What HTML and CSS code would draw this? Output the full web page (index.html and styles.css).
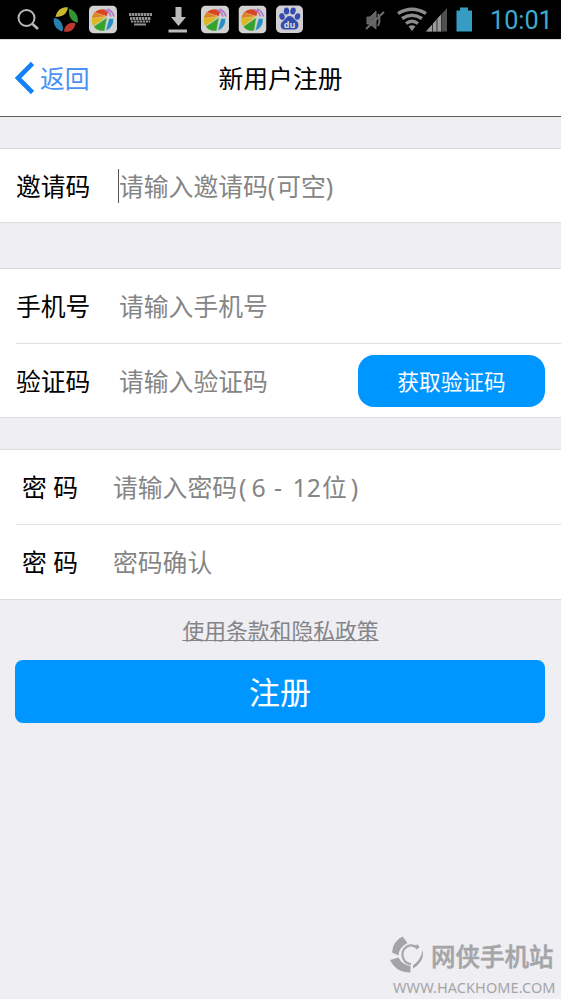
FILE: index.html
```html
<!DOCTYPE html>
<html lang="zh-CN">
<head>
<meta charset="utf-8">
<title>新用户注册</title>
<link rel="stylesheet" href="styles.css">
</head>
<body>
<svg width="0" height="0" class="defs">
  <defs>
    <clipPath id="disc"><circle cx="13.500" cy="14.500" r="10.800"/></clipPath>
    <symbol id="fan" viewBox="0 0 28 28">
      <rect width="28" height="28" rx="5" fill="#d2d2d2"/>
      <g clip-path="url(#disc)" stroke="#d2d2d2" stroke-width=".4">
        <path d="M18 11L3 7L8 0L20 3Z" fill="#d8451f"/>
        <path d="M18 11L0 5V14Z" fill="#df8220"/>
        <path d="M18 11L0 13V24Z" fill="#dcb81f"/>
        <path d="M18 12L2 23L8 30L15 28Z" fill="#35a32b"/>
        <path d="M20 13L16 28L27 24V13Z" fill="#268fc8"/>
      </g>
      <path d="M15.500 4.500Q20 5 22 11M18.500 3.500Q23 5 25 11" fill="none" stroke="#b072c6" stroke-width="1.600"/>
    </symbol>
  </defs>
</svg>
<div class="status">
  <svg class="notices" width="310" height="39" viewBox="0 0 310 39">
    <g fill="none" stroke="#b9b9b9" stroke-width="2"><circle cx="26.500" cy="18" r="8"/><path d="M32.500 24L38 29" stroke-width="2.600"/></g>
    <path d="M55.500 17C57 10 62 6.500 68 7.500Q67 14 61.500 16Q58 17 55.500 17Z" fill="#c9b72c"/>
    <path d="M69 8.500C76 11 79 17 77.500 23Q71 21 69.500 16Q68.500 12 69 8.500Z" fill="#329432"/>
    <path d="M75.500 23.500C75 29 70 33 64 31.500Q64 26 69 23.500Q73 22 75.500 23.500Z" fill="#bd3630"/>
    <path d="M54 18C52.500 24 56 30 62.500 31.500Q64 27 61 22Q58 18 54 18Z" fill="#287fad"/>
    <use href="#fan" x="89" y="5.500" width="28" height="28"/>
    <g stroke="#929292" fill="none">
      <path d="M129 14.500H152M130 18.500H151" stroke-width="3" stroke-dasharray="2.400 .6"/>
      <path d="M131 21.500H150" stroke-width="2" stroke-dasharray="2.400 .6"/>
      <path d="M134 24.500H146" stroke-width="2"/>
    </g>
    <path d="M175.500 7H181.500V17H186L178.500 26L171 17H175.500ZM168.500 29.500H187V32.500H168.500Z" fill="#bbb"/>
    <use href="#fan" x="201" y="5.500" width="28" height="28"/>
    <use href="#fan" x="238.500" y="5.500" width="28" height="28"/>
    <rect x="276" y="5.500" width="27" height="27.500" rx="5" fill="#cfcfd3"/>
    <g fill="#344bb0">
      <ellipse cx="282" cy="16.500" rx="2.700" ry="3.400" transform="rotate(-12 282 16.500)"/>
      <ellipse cx="286.500" cy="11" rx="2.700" ry="3.500"/>
      <ellipse cx="293" cy="11" rx="2.700" ry="3.500" transform="rotate(12 293 11)"/>
      <ellipse cx="297.500" cy="16.500" rx="2.700" ry="3.300" transform="rotate(15 297.500 16.500)"/>
      <path d="M289.500 16C293 16 294 19.500 297 21.500C300 25 298 30 294 29.500H285C281 30 279 25 282.500 21.500C286 19.500 286 16 289.500 16Z"/>
    </g>
    <text class="paw-text" x="289.500" y="27.500" text-anchor="middle">du</text>
  </svg>
  <svg class="signals" width="116" height="39" viewBox="360 0 116 39">
    <g fill="none" stroke="#6c6c6c"><path d="M367 17H370L376 11V29L370 24H367Z" fill="#636363"/><path d="M378 14Q381 20 378 26" stroke-width="2"/><path d="M366 29L384 12" stroke-width="2"/></g>
    <g fill="none" stroke="#8c8c8c" stroke-width="3.300">
      <path d="M398 13.500Q412 5 426 13.500"/><path d="M402 18.500Q412 12 422 18.500"/><path d="M406 23.500Q412 19 418 23.500"/>
    </g>
    <path d="M408.500 26.500Q412 24 415.500 26.500L412 31Z" fill="#8c8c8c"/>
    <path d="M426 31.500L447 8V31.500Z" fill="#505050"/>
    <path d="M426 31.500L441 14.500V31.500Z" fill="#9a9a9a"/>
    <path d="M432.500 24V32M437 19V32M441.500 14V32" stroke="#333" stroke-width="1"/>
    <path d="M456.500 10.500H460V7.500H468V10.500H472V31.500H456.500Z" fill="#369cc4"/>
  </svg>
  <span class="clock">10:01</span>
</div>
<header class="header">
  <a class="back">
    <svg width="20" height="34" viewBox="0 0 20 34"><path d="M18.500 2.500L4 17L18.500 31.500" fill="none" stroke="#1480f5" stroke-width="4.600"/></svg>
    <span>返回</span>
  </a>
  <h1 class="title">新用户注册</h1>
</header>
<main>
  <section class="group invite">
    <div class="row"><label class="label">邀请码</label><span class="caret"></span><span class="hint">请输入邀请码<span class="paren">(</span>可空<span class="paren">)</span></span></div>
  </section>
  <section class="group phone">
    <div class="row"><label class="label">手机号</label><span class="hint">请输入手机号</span></div>
    <div class="divider"></div>
    <div class="row"><label class="label">验证码</label><span class="hint">请输入验证码</span><button class="code">获取验证码</button></div>
  </section>
  <section class="group password">
    <div class="row"><label class="label">密 码</label><span class="hint">请输入密码<span class="open">(</span>6<span class="dash"> - </span>12<span class="unit">位</span><span>)</span></span></div>
    <div class="divider"></div>
    <div class="row"><label class="label">密 码</label><span class="hint">密码确认</span></div>
  </section>
  <a class="terms">使用条款和隐私政策</a>
  <button class="submit">注册</button>
</main>
<footer class="mark">
  <svg width="36" height="40" viewBox="0 0 36 40">
    <path d="M13.500 1.500L18.500 8Q10 12 9.500 20.500L3 17.500Q4 6 13.500 1.500Z" fill="#a4a4a7"/>
    <path d="M1 25L9.500 22.500Q13 30 21.500 31V37.500Q7 37.500 1 25Z" fill="#a4a4a7"/>
    <path d="M33.500 15Q36 26 24 33.500V30.500Q32 25 33.500 15Z" fill="#a4a4a7"/>
    <path d="M28.500 13.500Q24 8.500 18 11.500Q11 16 14.500 24Q17 29 22 29" fill="none" stroke="#a8a8ab" stroke-width="2.200"/>
    <path d="M26 10L29 9.500L30.500 12.500L27.500 14.500Z" fill="#a8a8ab"/>
  </svg>
  <span class="mark-name">网侠手机站</span>
  <span class="mark-url">WWW.HACKHOME.COM</span>
</footer>
</body>
</html>
```

FILE: styles.css
```css
* { box-sizing: border-box; }
body {
  margin: 0;
  width: 561px;
  height: 999px;
  overflow: hidden;
  display: flex;
  flex-direction: column;
  background: #eeeef3;
  color: #000;
  font-family: "Noto Sans", "Noto Sans CJK SC", sans-serif;
  font-size: 24.8px;
}
.defs { position: absolute; }
button { border: 0; padding: 0; font-family: inherit; color: #fff; background: #0096ff; }
.status { height: 39px; flex: none; background: #000; display: flex; }
.signals { margin-left: 50px; }
.paw-text { font: bold 9px "Noto Sans", sans-serif; fill: #ddd; }
.clock { margin-left: 14px; line-height: 41px; font-family: Roboto, sans-serif; font-size: 25.2px; color: #3fa9d0; }
.header {
  height: 78px;
  flex: none;
  display: grid;
  grid-template-columns: 1fr auto 1fr;
  align-items: center;
  background: #fff;
  border-top: 1px solid #ddd;
  border-bottom: 1px solid #60605c;
}
.back { display: flex; align-items: center; padding-left: 14px; gap: 6px; color: #4a92f5; line-height: 34px; }
.title { margin: 0; font-size: 24.8px; font-weight: 400; line-height: 34px; }
main { display: flex; flex-direction: column; }
.group { background: #fff; border-top: 1px solid #dcdce0; border-bottom: 1px solid #dcdce0; }
.invite { margin-top: 31px; }
.phone { margin-top: 45px; }
.password { margin-top: 31px; }
.row { height: 74px; display: flex; align-items: center; padding: 0 16px; line-height: 36px; }
.invite .row { height: 73px; }
.phone .row:last-child { height: 73px; }
.divider { height: 1px; margin-left: 16px; background: #e0e0e3; }
.label { width: 103px; flex: none; white-space: pre; }
.hint { color: #858585; white-space: pre; }
.paren { letter-spacing: 1px; }
.caret { width: 1px; height: 34px; margin-left: -1px; background: #555; }
.code { width: 187px; height: 52px; margin-left: auto; border-radius: 16px; font-size: 21.7px; line-height: 54px; }
.password .label { width: 97px; padding-left: 6px; }
.open { margin: 0 5px 0 2px; }
.dash { letter-spacing: 2px; }
.unit { margin: 0 4px 0 1px; }
.terms { align-self: center; margin-top: 15px; height: 32px; line-height: 32px; font-size: 21.8px; color: #858588; text-decoration: underline; text-decoration-thickness: 1px; }
.submit { height: 63px; margin: 13px 16px 0 15px; border-radius: 8px; font-size: 31px; line-height: 65px; }
.mark {
  margin-top: auto;
  align-self: flex-end;
  width: 172px;
  height: 64px;
  display: grid;
  grid-template-columns: 42px 1fr;
  grid-template-rows: 40px 24px;
  color: #a5a5a8;
}
.mark-name { font-size: 24.5px; font-weight: 500; line-height: 43px; white-space: nowrap; -webkit-text-stroke: 0.5px #a5a5a8; }
.mark-url { grid-column: 1 / 3; padding-left: 4px; font-size: 14.5px; letter-spacing: 0.08px; line-height: 24px; white-space: nowrap; }
```
